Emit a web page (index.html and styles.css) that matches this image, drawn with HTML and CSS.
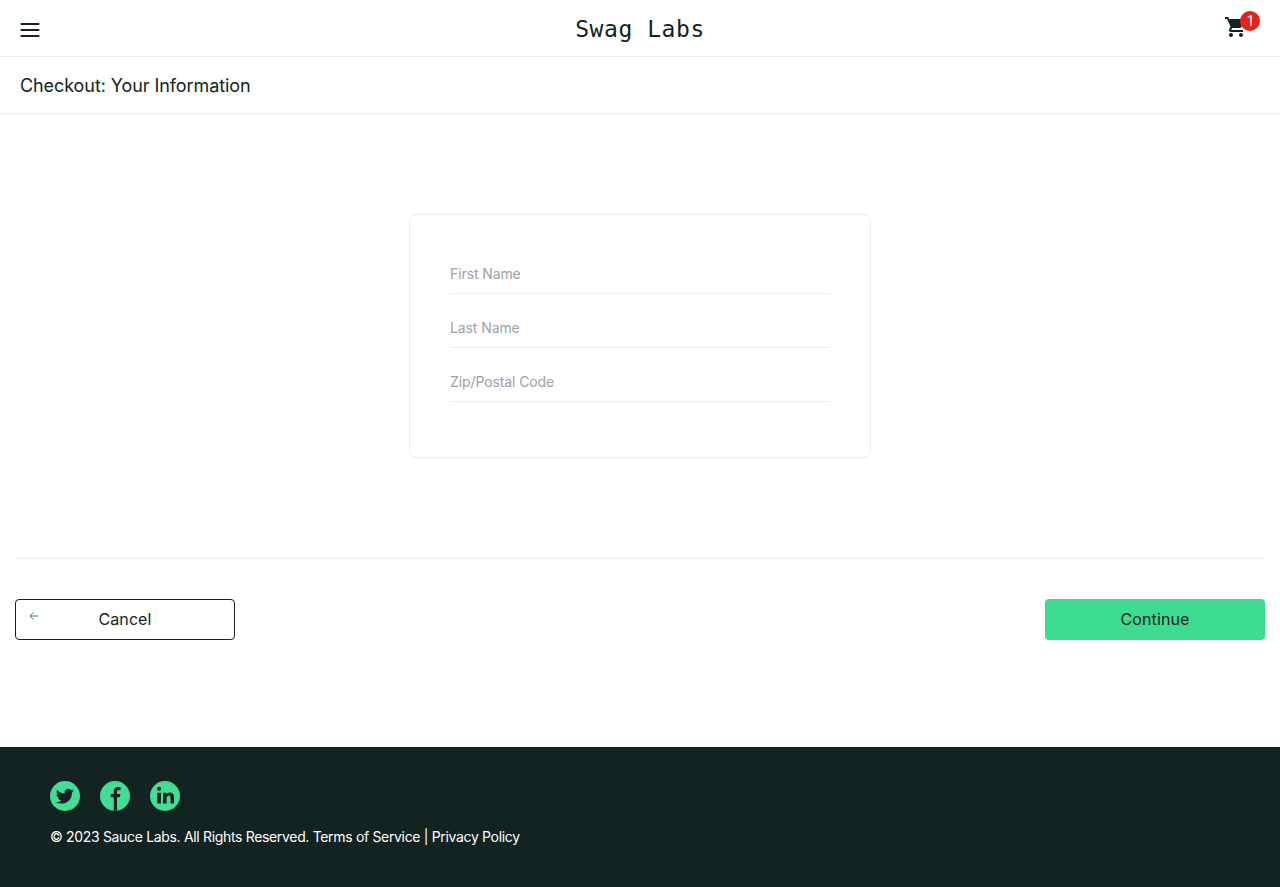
FILE: index.html
```html
<!DOCTYPE html>
<html lang="en">
<head>
<meta charset="utf-8">
<title>Swag Labs</title>
<link rel="stylesheet" href="styles.css">
</head>
<body>
<div class="page">
  <header class="topbar">
    <button class="icon-btn" aria-label="Open Menu">
      <svg width="20" height="16" viewBox="0 0 20 16"><path d="M1.500 2h17M1.500 8h17M1.500 14h17" stroke="#132322" stroke-width="2.200" stroke-linecap="round" fill="none"/></svg>
    </button>
    <div class="logo">Swag Labs</div>
    <a class="cart" href="#" aria-label="Cart">
      <svg width="24" height="24" viewBox="0 0 24 24"><path fill="#132322" d="M7 18c-1.100 0-1.990.9-1.990 2S5.900 22 7 22s2-.9 2-2-.9-2-2-2zM1 2v2h2l3.600 7.590-1.350 2.450c-.16.280-.25.610-.25.960 0 1.100.9 2 2 2h12v-2H7.420c-.14 0-.25-.11-.25-.25l.03-.12.9-1.630h7.450c.75 0 1.410-.41 1.750-1.030l3.580-6.490A1 1 0 0 0 20 4H5.210l-.94-2H1zm16 16c-1.100 0-1.990.9-1.990 2s.89 2 1.990 2 2-.9 2-2-.9-2-2-2z"/></svg>
      <span class="badge">1</span>
    </a>
  </header>
  <div class="subheader"><span class="title">Checkout: Your Information</span></div>
  <main class="content">
    <form class="card">
      <input class="field" type="text" placeholder="First Name">
      <input class="field" type="text" placeholder="Last Name">
      <input class="field" type="text" placeholder="Zip/Postal Code">
    </form>
    <div class="actions">
      <button class="btn btn-cancel" type="button">
        <svg class="arrow" width="10" height="10" viewBox="0 0 10 10"><path d="M9.500 5H1M4.500 1.500 1 5l3.500 3.500" stroke="#3d8a6a" stroke-width="1" fill="none"/></svg>
        Cancel
      </button>
      <button class="btn btn-continue" type="button">Continue</button>
    </div>
  </main>
  <footer class="footer">
    <div class="social">
      <a class="social-link" href="#" aria-label="Twitter">
        <svg width="30" height="30" viewBox="0 0 30 30"><circle cx="15" cy="15" r="15" fill="#42de96"/><path fill="#132322" transform="translate(1.300 1.300) scale(.91)" d="M24.800 9.300c-.7.300-1.500.5-2.300.6.800-.5 1.500-1.300 1.800-2.200-.8.500-1.700.8-2.600 1a4 4 0 0 0-6.900 3.700c-3.400-.2-6.400-1.800-8.400-4.300-.4.600-.6 1.300-.6 2 0 1.400.7 2.600 1.800 3.400-.7 0-1.300-.2-1.900-.5 0 2 1.400 3.600 3.300 4-.6.200-1.200.2-1.800.1.500 1.600 2 2.800 3.800 2.800-1.700 1.300-3.800 1.900-6 1.700 1.800 1.200 4 1.800 6.200 1.800 7.400 0 11.700-6.300 11.400-12 .8-.6 1.600-1.300 2.200-2.100z"/></svg>
      </a>
      <a class="social-link" href="#" aria-label="Facebook">
        <svg width="30" height="30" viewBox="0 0 30 30"><circle cx="15" cy="15" r="15" fill="#42de96"/><path fill="#132322" d="M17 29.700V16.300h2.900l.5-3.400H17v-2.100c0-1 .4-1.600 1.700-1.600h1.800V6.100c-.4-.1-1.400-.2-2.500-.2-2.600 0-4.300 1.600-4.300 4.400v2.600h-3v3.400h3v13.400z"/></svg>
      </a>
      <a class="social-link" href="#" aria-label="LinkedIn">
        <svg width="30" height="30" viewBox="0 0 30 30"><circle cx="15" cy="15" r="15" fill="#42de96"/><path fill="#132322" d="M7.300 11.800h3.600V22.600H7.300zM9.100 5.700a2.100 2.100 0 1 1 0 4.200 2.100 2.100 0 0 1 0-4.200zM13 11.800h3.300v1.500c.5-.9 1.700-1.800 3.400-1.800 3.600 0 4.300 2.300 4.300 5.400v5.700h-3.500v-5c0-1.300 0-2.900-1.800-2.900s-2.100 1.400-2.100 2.800v5.100H13z"/></svg>
      </a>
    </div>
    <p class="copy">© 2023 Sauce Labs. All Rights Reserved. Terms of Service | Privacy Policy</p>
  </footer>
</div>
</body>
</html>
```
FILE: styles.css
```css
* { box-sizing: border-box; }
html, body { margin: 0; padding: 0; height: 100%; }
body { font-family: "Inter", "Liberation Sans", sans-serif; color: #132322; background: #fff; }
.page { min-height: 887px; display: flex; flex-direction: column; }
.topbar { height: 57px; border-bottom: 1px solid #ededef; display: grid; grid-template-columns: 1fr auto 1fr; align-items: center; padding: 0 20px; }
.icon-btn { border: 0; background: none; padding: 0; width: 20px; height: 16px; display: flex; margin-top: 2px; }
.logo { font-family: "DejaVu Sans Mono", monospace; font-size: 23px; letter-spacing: .55px; text-align: center; line-height: 57px; padding-top: 1px; }
.cart { width: 24px; height: 24px; margin-right: 12px; position: relative; display: block; margin-top: -4px; justify-self: end; }
.badge { position: absolute; top: -4px; left: 16px; width: 20px; height: 20px; border-radius: 50%; background: #e2231a; color: #fff; font-size: 14px; line-height: 20px; text-align: center; }
.subheader { height: 57px; border-bottom: 1px solid #ededef; padding-left: 20px; display: flex; align-items: center; }
.title { font-size: 18px; font-weight: 400; letter-spacing: -0.085px; }
.content { flex: 1; padding: 100px 15px 0; }
.card { width: 462px; height: 244px; margin: 0 auto; border: 1px solid #ededef; border-radius: 8px; padding: 35px 40px 0; display: flex; flex-direction: column; gap: 10px; }
.field { display: block; width: 100%; height: 44px; border: 0; border-bottom: 1px solid #ededef; padding: 10px 0 7px; font: 14px "Inter", "Liberation Sans", sans-serif; outline: none; background: none; letter-spacing: -0.1px; }
.field::placeholder { color: #a0a0a8; opacity: 1; }
.actions { margin-top: 100px; border-top: 1px solid #ededef; padding-top: 40px; display: flex; justify-content: space-between; }
.btn { width: 220px; height: 41px; border-radius: 4px; font: 400 16px "Inter", "Liberation Sans", sans-serif; letter-spacing: .1px; color: #132322; text-align: center; padding: 0 0 2px; }
.btn-cancel { background: #fff; border: 1px solid #132322; position: relative; }
.arrow { position: absolute; left: 13px; top: 11px; }
.btn-continue { background: #3ddc91; border: 0; }
.footer { height: 140px; background: #132322; padding: 34px 50px 0; color: #fff; }
.social { display: flex; gap: 20px; height: 30px; }
.social-link { display: block; width: 30px; height: 30px; }
.copy { margin: 17px 0 0; font-size: 14px; line-height: 18px; letter-spacing: -0.33px; }
```
